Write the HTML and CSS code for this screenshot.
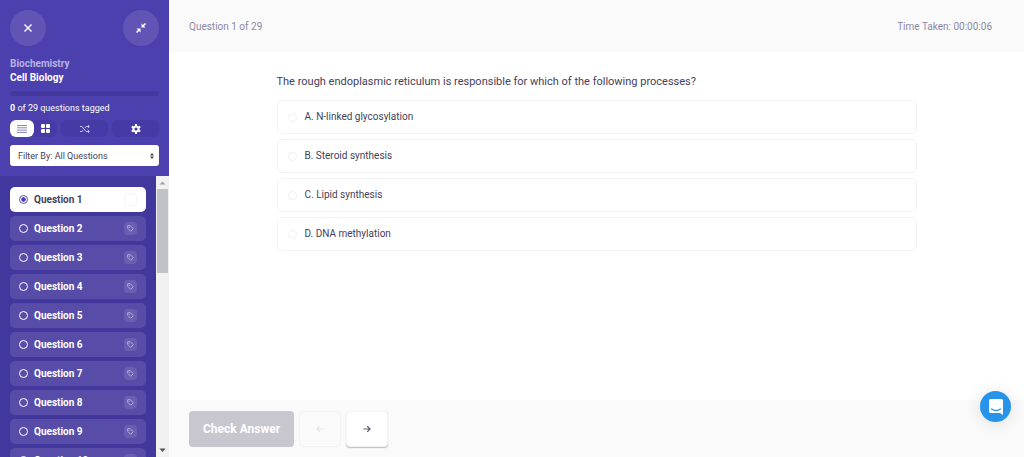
FILE: index.html
```html
<!DOCTYPE html>
<html lang="en">
<head>
    <meta charset="UTF-8">
    <meta name="viewport" content="width=device-width, initial-scale=1.0">
    <title>Cell Biology - Question 1</title>
    <link rel="stylesheet" href="styles.css">
</head>
<body>

<aside class="sidebar">
    <div class="sidebar-top">
        <div class="round-buttons">
            <button class="round-button" type="button" aria-label="Close">
                <svg width="10" height="10" viewBox="0 0 10 10"><path d="M1.500 1.500l7 7M8.500 1.500l-7 7" stroke="#fff" stroke-width="1.400"/></svg>
            </button>
            <button class="round-button" type="button" aria-label="Collapse">
                <svg width="12" height="12" viewBox="0 0 12 12"><path d="M10.500 1.500L7.500 4.500M1.500 10.500l3-3" stroke="#fff" stroke-width="1.500"/><path d="M6.500 1.500v4h4zM5.500 10.500v-4h-4z" fill="#fff"/></svg>
            </button>
        </div>
        <div class="subject">Biochemistry</div>
        <h1 class="topic">Cell Biology</h1>
        <div class="progress"></div>
        <p class="tagged"><b>0</b> of 29 questions tagged</p>
        <div class="tools">
            <div class="view-switch">
                <button class="tool active" type="button" aria-label="List view">
                    <svg width="10" height="8" viewBox="0 0 10 8"><path d="M0 .5h10M0 2.800h10M0 5.100h10M0 7.400h10" stroke="#8a85bd" stroke-width="1"/></svg>
                </button>
                <button class="tool" type="button" aria-label="Grid view">
                    <svg width="9" height="9" viewBox="0 0 9 9"><g fill="#fff"><rect width="4" height="4" rx="1"/><rect x="5" width="4" height="4" rx="1"/><rect y="5" width="4" height="4" rx="1"/><rect x="5" y="5" width="4" height="4" rx="1"/></g></svg>
                </button>
            </div>
            <button class="tool wide" type="button" aria-label="Shuffle">
                <svg width="10" height="8" viewBox="0 0 10 8"><path d="M0 1.500h2l4 5h3M0 6.500h2l1.300-1.600M4.700 3.100L6 1.500h3M7.800 0l1.600 1.500L7.800 3M7.800 5l1.600 1.500L7.800 8" fill="none" stroke="#d5d2ee" stroke-width=".9"/></svg>
            </button>
            <button class="tool wide" type="button" aria-label="Settings">
                <svg width="10" height="10" viewBox="0 0 10 10"><circle cx="5" cy="5" r="2.600" fill="none" stroke="#fff" stroke-width="2"/><path d="M5 0v2M5 8v2M.7 2.500l1.700 1M7.600 6.500l1.700 1M.7 7.500l1.700-1M7.600 3.500l1.700-1" stroke="#fff" stroke-width="2"/></svg>
            </button>
        </div>
        <div class="filter">
            <select class="filter-select" aria-label="Filter questions">
                <option>Filter By: All Questions</option>
                <option>Filter By: Tagged</option>
            </select>
            <svg class="filter-arrows" width="4" height="6" viewBox="0 0 4 6"><path d="M0 2.400L2 0l2 2.400zM0 3.600L2 6l2-2.400z" fill="#444"/></svg>
        </div>
    </div>

    <div class="list-area">
        <ul class="question-list" id="questionList"></ul>
        <div class="scrollbar">
            <svg width="13" height="13" viewBox="0 0 13 13"><path d="M3.500 8.500h6l-3-3z" fill="#a3a3a3"/></svg>
            <div class="scroll-track"><div class="scroll-thumb"></div></div>
            <svg width="13" height="13" viewBox="0 0 13 13"><path d="M3.500 4.500h6l-3 3.500z" fill="#505050"/></svg>
        </div>
    </div>
</aside>

<main class="main">
    <header class="main-header">
        <span>Question 1 of 29</span>
        <span>Time Taken: 00:00:06</span>
    </header>

    <form class="question">
        <fieldset class="answers">
            <legend class="prompt">The rough endoplasmic reticulum is responsible for which of the following processes?</legend>
            <label class="answer"><input class="answer-radio" type="radio" name="answer" value="a">A. N-linked glycosylation</label>
            <label class="answer"><input class="answer-radio" type="radio" name="answer" value="b">B. Steroid synthesis</label>
            <label class="answer"><input class="answer-radio" type="radio" name="answer" value="c">C. Lipid synthesis</label>
            <label class="answer"><input class="answer-radio" type="radio" name="answer" value="d">D. DNA methylation</label>
        </fieldset>
    </form>

    <footer class="main-footer">
        <button class="check" type="button">Check Answer</button>
        <button class="nav-button" type="button" aria-label="Previous question" disabled>
            <svg width="8" height="8" viewBox="0 0 8 8"><path d="M7.500 4H1M3.800 1.200L1 4l2.800 2.800" fill="none" stroke="#e6e6ea" stroke-width="1.200"/></svg>
        </button>
        <button class="nav-button next" type="button" aria-label="Next question">
            <svg width="8" height="8" viewBox="0 0 8 8"><path d="M.5 4H7M4.200 1.200L7 4 4.200 6.800" fill="none" stroke="#5c586e" stroke-width="1.200"/></svg>
        </button>
    </footer>
</main>

<button class="chat" type="button" aria-label="Open chat">
    <svg width="14" height="16" viewBox="0 0 14 16"><path d="M1.500 0h11Q14 0 14 1.500V16l-3-2H1.500Q0 14 0 12.500v-11Q0 0 1.500 0z" fill="#fff"/><path d="M2.500 10q4.500 3.200 9 0" fill="none" stroke="#2893ea" stroke-width="1.200" stroke-linecap="round"/></svg>
</button>

<script>
    const list = document.getElementById('questionList');

    for (let i = 1; i <= 29; i++) {
        const checked = i === 1 ? 'checked' : '';
        list.insertAdjacentHTML('beforeend', `
            <li class="question-item">
                <input class="question-radio" type="radio" name="question" id="q${i}" ${checked}>
                <label for="q${i}">Question ${i}</label>
                <button class="tag" type="button" aria-label="Tag question ${i}">
                    <svg width="7" height="7" viewBox="0 0 7 7"><path d="M.7.7h2.600l3 3-2.600 2.600-3-3z" fill="none" stroke="#b9b4e0" stroke-width=".9"/><circle cx="2.200" cy="2.200" r=".5" fill="#b9b4e0"/></svg>
                </button>
            </li>`);
    }
</script>

</body>
</html>
```
FILE: styles.css
```css
* {
    box-sizing: border-box;
}
body {
    display: flex;
    height: 100vh;
    margin: 0;
    background: #ffffff;
    color: #45415a;
    font-family: Roboto, "Liberation Sans", sans-serif;
    font-size: 10px;
    line-height: 14px;
    overflow: hidden;
}
button, select {
    margin: 0;
    padding: 0;
    border: none;
    font-family: inherit;
    font-size: inherit;
    line-height: inherit;
    cursor: pointer;
}
button {
    display: flex;
    align-items: center;
    justify-content: center;
}

/* Sidebar */
.sidebar {
    display: flex;
    flex-direction: column;
    flex: none;
    width: 169px;
    background: #4b40ad;
    color: #ffffff;
}
.sidebar-top {
    padding: 10px;
}
.round-buttons {
    display: flex;
    justify-content: space-between;
    margin-bottom: 11px;
}
.round-button {
    width: 36px;
    height: 36px;
    border-radius: 50%;
    background: #6055b5;
}
.subject {
    color: #b8b2e2;
    font-weight: bold;
}
.topic {
    margin: 0;
    font-size: 10px;
    font-weight: bold;
}
.progress {
    height: 5px;
    margin: 6px 0 5px;
    border-radius: 3px;
    background: #43389f;
}
.tagged {
    margin: 0 0 5px;
    font-size: 9px;
}
.tools {
    display: flex;
    gap: 4px;
    margin-bottom: 8px;
}
.view-switch {
    display: flex;
    flex: 1;
    border-radius: 6px;
    background: #463ba6;
}
.tool {
    flex: 1;
    height: 17px;
    border-radius: 6px;
    background: transparent;
}
.tool.active {
    background: #ffffff;
}
.tool.wide {
    background: #463ba6;
}
.filter {
    position: relative;
}
.filter-select {
    display: block;
    width: 100%;
    height: 21px;
    padding: 0 8px;
    appearance: none;
    border-radius: 3px;
    background: #ffffff;
    color: #45415a;
    font-size: 9px;
}
.filter-arrows {
    position: absolute;
    top: 8px;
    right: 5px;
    pointer-events: none;
}

/* Question list */
.list-area {
    display: flex;
    flex: 1;
    min-height: 0;
    background: #42379c;
}
.question-list {
    flex: 1;
    margin: 0;
    padding: 11px 10px;
    list-style: none;
    overflow-y: auto;
    scrollbar-width: none;
}
.question-item {
    display: flex;
    align-items: center;
    height: 25px;
    margin-bottom: 4px;
    padding: 0 9px;
    border-radius: 5px;
    background: #574da9;
    font-weight: bold;
}
.question-item label {
    flex: 1;
}
.question-radio {
    width: 9px;
    height: 9px;
    margin: 0 6px 0 0;
    appearance: none;
    border: 1px solid #ffffff;
    border-radius: 50%;
}
.question-radio:checked {
    border-color: #5a50b5;
    background: radial-gradient(circle, #4b40ad 40%, #ffffff 50%);
}
.question-item:has(:checked) {
    background: #ffffff;
    color: #45415a;
}
.tag {
    width: 13px;
    height: 13px;
    border-radius: 4px;
    background: #685fb3;
}
.question-item:has(:checked) .tag {
    border: 1px solid #f5f5f7;
    background: #ffffff;
}
.question-item:has(:checked) .tag svg {
    visibility: hidden;
}
.scrollbar {
    display: flex;
    flex-direction: column;
    width: 13px;
    background: #f1f1f1;
}
.scroll-track {
    flex: 1;
}
.scroll-thumb {
    height: 33%;
    margin: 0 1px;
    background: #c1c1c8;
}

/* Main area */
.main {
    display: flex;
    flex-direction: column;
    flex: 1;
}
.main-header {
    display: flex;
    justify-content: space-between;
    padding: 20px 32px 18px 20px;
    background: #fafafa;
    color: #8d89a5;
}
.question {
    flex: 1;
    padding: 23px 20px;
}
.answers {
    display: flex;
    flex-direction: column;
    gap: 5px;
    max-width: 640px;
    margin: 0 auto;
    padding: 0;
    border: none;
}
.prompt {
    margin-bottom: 11px;
    padding: 0;
    font-size: 11px;
}
.answer {
    display: flex;
    align-items: center;
    height: 34px;
    padding: 0 10px;
    border: 1px solid #f3f3f5;
    border-radius: 5px;
}
.answer-radio {
    width: 9px;
    height: 9px;
    margin: 0 8px 0 0;
    appearance: none;
    border: 1px solid #f0f0f2;
    border-radius: 50%;
}
.answer-radio:checked {
    background: #4b40ad;
}
.main-footer {
    display: flex;
    gap: 5px;
    padding: 11px 20px 10px;
    background: #fafafa;
}
.check {
    height: 36px;
    padding: 0 14px;
    border-radius: 4px;
    background: #c8c6ce;
    color: #ffffff;
    font-size: 12px;
    font-weight: bold;
}
.nav-button {
    width: 42px;
    height: 36px;
    border: 1px solid #f3f3f5;
    border-radius: 4px;
    background: transparent;
}
.nav-button.next {
    background: #ffffff;
    box-shadow: 0 1px 1px #bdbbc4;
}

/* Chat launcher */
.chat {
    position: fixed;
    right: 13px;
    bottom: 35px;
    width: 31px;
    height: 31px;
    border-radius: 50%;
    background: #2893ea;
    box-shadow: 0 1px 16px rgba(0, 0, 0, 0.12);
}
```
